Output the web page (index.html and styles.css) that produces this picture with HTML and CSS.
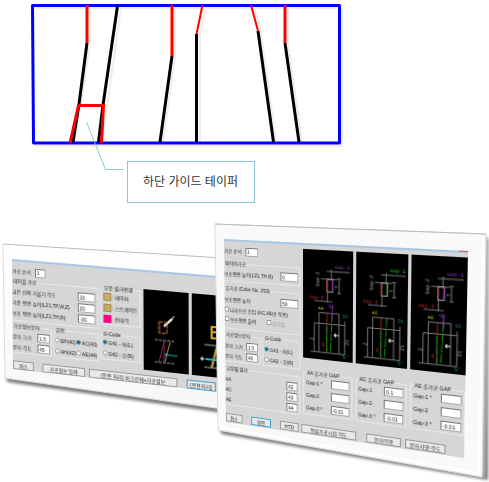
FILE: index.html
```html
<!DOCTYPE html>
<html lang="ko">
<head>
<meta charset="utf-8">
<title>하단 가이드 테이퍼</title>
<link rel="stylesheet" href="styles.css">
</head>
<body>
<main>
<section class="section-view">
  <svg class="drawing" viewBox="0 0 489 150" fill="none" stroke-width="3" aria-hidden="true">
    <g stroke="#f1efe5" stroke-width="2">
      <path d="M36 8H337M342 8V146H35M90 8V44L75 143M121 8L102 142M175 8V58L163 142M206 8L200 35V142M254 8L261 32L276 142M288 8V44L302 142"/>
    </g>
    <path stroke="#0000ff" d="M33 5.500H339.500V143H33.500L32.500 5.500Z" stroke-linejoin="round"/>
    <g stroke="#000">
      <path d="M87 43L79 104L73 142M117.500 6L103 105L98.500 142M172 56L160 142M196.500 34V142M258 31L273.500 142M285 43L299 142"/>
    </g>
    <g stroke="#ff0000">
      <path d="M87 5V43M70 143L78.500 105.500H103.500L101.500 143M172 5V56M285 5V43"/>
      <path stroke-width="2" d="M202.500 5L196.500 34M251 5L258 31"/>
    </g>
    <path stroke="#8fc7d8" stroke-width="1" d="M86.500 122L105.500 169.500H123.500"/>
  </svg>
  <p class="callout">하단 가이드 테이퍼</p>
</section>

<section class="scene">
  <svg class="frame" viewBox="0 213 489 269" aria-hidden="true">
    <defs>
      <linearGradient id="edge" x1="0" y1="0" x2="0" y2="1"><stop offset="0" stop-color="#fff"/><stop offset="1" stop-color="#f7f7f7"/></linearGradient>
      <filter id="soft" x="-5%" y="-10%" width="110%" height="125%"><feGaussianBlur stdDeviation="1.500"/></filter>
    </defs>
    <path d="M5 377L230 409V414L8 382Z" fill="#777" filter="url(#soft)"/>
    <path d="M3 244L230 258V410L5 378Z" fill="url(#edge)"/>
    <path d="M3 244L230 258.500" stroke="#bbb" fill="none"/>
    <path d="M3 244L5 378L230 410" stroke="#ddd" fill="none"/>
  </svg>
  <form class="dialog table-dialog">
    <div class="titlebar"></div>
    <div class="body">
      <div class="settings">
        <label class="order">가공 순서 <input value="1"></label>
        <fieldset class="fields">
          <legend>테이블 가공</legend>
          <label>굽은 선의 기울기 각도 <input value="10."></label>
          <label>기준 평면 높이(LZ1,TP,W,Z) <input value="20."></label>
          <label>보조 평면 높이(LZ1,TH,R) <input value="-30."></label>
        </fieldset>
        <div class="pair">
          <fieldset class="fields">
            <legend>가공정보문자</legend>
            <label>문자 크기 <input value="1.5"></label>
            <label>문자 각도 <input value="45"></label>
          </fieldset>
          <fieldset class="types">
            <legend>유형</legend>
            <label><input type="radio" name="type">EP(40)</label>
            <label><input type="radio" name="type" checked>AC(43)</label>
            <label><input type="radio" name="type">AH(42)</label>
            <label><input type="radio" name="type">AE(44)</label>
          </fieldset>
        </div>
      </div>
      <div class="colors">
        <fieldset class="palette">
          <legend>부분 칼라변경</legend>
          <div><i class="swatch"></i>: 테이퍼</div>
          <div><i class="swatch"></i>: 스트레이트</div>
          <div><i class="swatch pink"></i>: 반대각</div>
        </fieldset>
        <fieldset class="gcode">
          <legend>G-Code</legend>
          <label><input type="radio" name="g1" checked>G41 - 좌(L)</label>
          <label><input type="radio" name="g1">G42 - 우(R)</label>
        </fieldset>
      </div>
      <svg class="preview" viewBox="0 0 44 80" fill="none" aria-hidden="true">
        <path d="M20 35L28 27" stroke="#fff" stroke-width="2"/><path d="M27 28l3-4" stroke="#eee"/>
        <path d="M15 31H23V42H15Z" stroke="#b48a20" stroke-dasharray="4 1"/><path d="M16 31V42M20 50L15 71M20 50V71" stroke="#92205c"/>
        <path d="M26 50L21 70" stroke="#b48a20"/><path d="M11 49H30M11 71H30" stroke="#999" stroke-dasharray="3 1"/>
        <path d="M21 63H33M21 63l2-2M21 63l2 2" stroke="#2aa6bd"/>
      </svg>
      <svg class="preview" viewBox="0 0 44 80" fill="none" aria-hidden="true">
        <path d="M26 31H19V42H26M19 36H26" stroke="#d5a82d" stroke-width="2"/><path d="M12 49H32M12 71H32" stroke="#aaa"/><path d="M24 50L19 71" stroke="#d5a82d" stroke-width="2"/><path d="M13 63H25" stroke="#2aa6bd" stroke-width="2"/><path d="M8 63H12M10 61V65" stroke="#fff"/>
      </svg>
    </div>
    <div class="actions">
      <button type="button">취소</button><button type="button">가공정보 입력</button><button type="button">(응용 처리) 마크로체+가공정보</button><button type="button" class="default">(응용처리)</button>
    </div>
  </form>

  <svg class="frame" viewBox="0 213 489 269" aria-hidden="true">
    <path d="M219 429L483 476L488 236V480L222 434Z" fill="#777" filter="url(#soft)"/>
    <path d="M485 235L489 240L485 479L481 476Z" fill="#aaa" filter="url(#soft)"/>
    <path d="M215 224L486 234L482 477L218 430Z" fill="#f9f9f9"/>
    <path d="M215 224L486 234L482 477L218 430Z" fill="none" stroke="#ddd"/>
    <path d="M215 224L486 234" stroke="#bbb" fill="none"/>
    <path d="M483 237L479 473L220 427" stroke="#fff" stroke-width="2" fill="none"/>
  </svg>
  <form class="dialog wire-dialog">
    <div class="titlebar"><span class="close"></span></div>
    <div class="body">
      <div class="settings">
        <label class="order">가공 순서 <input value="1"></label>
        <fieldset class="fields wire">
          <legend>와이어가공</legend>
          <label>보조평면 높이(LZ1,TH,R) <input value="0"></label>
        </fieldset>
        <fieldset class="fields rest">
          <legend>휴가공 (Color No. 253)</legend>
          <label>보조평면 높이 <input value="50"></label>
          <label class="check"><input type="checkbox">나사으로 진입 (AC,AE만 적용)</label>
          <div class="checks"><label class="check"><input type="checkbox">보조평면 출력</label><label class="check off"><input type="checkbox" disabled>상대값</label></div>
        </fieldset>
        <div class="pair">
          <fieldset class="fields">
            <legend>가공정보문자</legend>
            <label>문자 크기 <input value="1.5"></label>
            <label>문자 각도 <input value="45"></label>
          </fieldset>
          <fieldset class="gcode">
            <legend>G-Code</legend>
            <label><input type="radio" name="g2" checked>G41 - 좌(L)</label>
            <label><input type="radio" name="g2">G42 - 우(R)</label>
          </fieldset>
        </div>
        <fieldset class="fields layers">
          <legend>교정별 칼라</legend>
          <label>AA <input value="42"></label>
          <label>AC <input value="43"></label>
          <label>AE <input value="44"></label>
        </fieldset>
      </div>
      <div class="column">
        <svg class="preview" viewBox="0 0 52 110" fill="none" aria-hidden="true">
          <g id="base">
            <path d="M25 20H49M30 18V28M19 28H36M26 41V52M12 51H31M38 27V42M36 27H40M36 42H40" stroke="#777"/>
            <path d="M25.500 28H31.500V41H25.500Z" stroke="#aaa"/><path d="M25.500 28V41" stroke="#c33"/>
            <path d="M17 63H38V104H17ZM12 74H44M12 74V104M44 70V104M8 104H44" stroke="#777"/>
            <path d="M25.500 63V104" stroke="#922"/><path d="M31 63L29 104M25 76V103" stroke="#1c8a1c" stroke-dasharray="9 1"/>
            <path d="M33 85H38M35 83l-2 2l2 2" stroke="#ddd"/>
            <text class="gray" transform="translate(17 36) rotate(-90)">Gap-2</text>
            <text class="gray" transform="translate(37 37) rotate(-90)">T</text>
            <text class="red" x="7" y="49">Gap-3</text>
            <text class="cyan" x="42" y="66">St</text><text class="cyan" x="42" y="108">S'</text>
            <text class="red" x="20" y="97">Q</text>
            <text class="gray" transform="translate(11 92) rotate(-90)">Z</text><text class="gray" transform="translate(48 94) rotate(-90)">Z1</text>
          </g>
          <path d="M31 28V41M31 55V68" stroke="#74279a"/><text class="purple" x="34" y="17">Gap-1</text><text class="yellow" x="16" y="60">AA</text><text class="purple" x="27" y="57">Q1</text>
        </svg>
        <fieldset class="fields gap"><legend>AA 휴가공 GAP</legend><label>Gap-1 * <input></label><label>Gap-2 <input></label><label>Gap-3 * <input value="-0.01"></label></fieldset>
      </div>
      <div class="column">
        <svg class="preview" viewBox="0 0 52 110" fill="none" aria-hidden="true">
          <use href="#base"/><path d="M31 28V41" stroke="#1fbf1f"/><text class="green" x="34" y="17">Gap-1</text><text class="yellow" x="16" y="60">AC</text>
        </svg>
        <fieldset class="fields gap"><legend>AC 휴가공 GAP</legend><label>Gap-1 <input value="0.1"></label><label>Gap-2 <input></label><label>Gap-3 * <input value="-0.01"></label></fieldset>
      </div>
      <div class="column">
        <svg class="preview" viewBox="0 0 52 110" fill="none" aria-hidden="true">
          <use href="#base"/><path d="M31 28V41M31 55V68" stroke="#9a35cc"/><text class="purple" x="34" y="17">Gap-1</text><text class="yellow" x="16" y="60">AE</text><text class="purple" x="27" y="57">Q1</text>
        </svg>
        <fieldset class="fields gap"><legend>AE 휴가공 GAP</legend><label>Gap-1 * <input></label><label>Gap-2 <input></label><label>Gap-3 * <input value="-0.01"></label></fieldset>
      </div>
    </div>
    <div class="actions">
      <button type="button">취소</button><button type="button" class="default">확인</button><button type="button">HTD</button><button type="button">형상가공시점 각도</button><button type="button">문자각행</button><button type="button">문자사행 각도</button>
    </div>
  </form>
</section>
</main>
</body>
</html>
```

FILE: styles.css
```css
* { box-sizing: border-box; }
body {
  margin: 0;
  background: #fff;
  color: #222;
  font-family: "Liberation Sans", "Noto Sans CJK KR", sans-serif;
  overflow: hidden;
}

.section-view { padding-bottom: 10px; }
.drawing { display: block; width: 100%; overflow: visible; }
.callout {
  width: fit-content;
  margin: 11px 0 0 127px;
  padding: 0 16px 0 15px;
  border: 1px solid #8fc7d8;
  background: #fff;
  font-size: 12px;
  line-height: 40px;
  color: #333;
}

/* Two tilted windows that overlap */
.scene { position: relative; height: 269px; }
.frame { position: absolute; inset: 0; width: 100%; }
.dialog {
  position: absolute;
  display: flex;
  flex-direction: column;
  overflow: hidden;
  background: #d6d6d6;
  font-size: 5px;
  line-height: 6px;
  white-space: nowrap;
  transform-origin: 0 0;
}
.table-dialog {
  left: 12px; top: 46px; width: 206px; height: 113px;
  transform: matrix3d(0.947, 0.0782, 0, -0.000256, 0.0089, 0.978, 0, 0.0000434, 0, 0, 1, 0, 0, 0, 0, 1);
}
.wire-dialog {
  left: 224px; top: 26px; width: 244px; height: 195px;
  transform: matrix3d(0.88, 0.0433, 0, -0.000492, 0.0105, 0.96, 0, 0.000119, 0, 0, 1, 0, 0, 0, 0, 1);
}
.titlebar { flex: none; height: 2px; background: #a9c6e6; }
.close { display: block; width: 8px; height: 1px; margin-left: auto; background: #c8584a; }
.body { display: flex; }

fieldset { min-width: 0; margin: 0; padding: 0 2px; border: 1px solid #e6e9ea; }
legend { padding: 0 1px; line-height: 6px; }
label { display: flex; align-items: center; }
input { margin: 0; font: inherit; color: #222; }
.dialog input:not([type]) {
  height: 9px; padding: 0 1px; border: 1px solid #aaa; border-top-color: #777; border-left-color: #777; border-radius: 0; background: #fff; line-height: 6px;
}
.fields label { justify-content: space-between; height: 11px; }
.order { gap: 4px; height: 12px; }
.order input { width: 11px; }
.settings > fieldset { border-left: 0; padding-left: 0; }
.settings .pair > fieldset:first-child { border-left: 0; padding-left: 0; }
.pair { display: flex; gap: 2px; }

input[type="radio"], input[type="checkbox"] {
  appearance: none; flex: none; width: 5px; height: 5px; margin-right: 1px; border: 1px solid #999; background: #fff;
}
input[type="radio"] { border-radius: 50%; }
input[type="radio"]:checked { border-color: #6fa3bd; background: #17617f; }

.swatch { flex: none; width: 8px; height: 8px; border: 1px solid #a18c50; background: #c8aa61; }
.swatch.pink { border-color: #ff0080; background: #ff0080; }
.preview { display: block; background: #000; }

.table-dialog .body { height: 101px; padding-top: 4px; }
.table-dialog .settings { width: 94px; }
.table-dialog .fields input { width: 18px; }
.table-dialog .settings > .fields { height: 44px; margin-top: 1px; padding-top: 2px; }
.table-dialog .pair { margin-top: 2px; }
.table-dialog .pair .fields { width: 41px; padding-top: 2px; padding-right: 1px; }
.table-dialog .pair .fields input { width: 13px; }
.types { display: grid; grid-template-columns: 1fr 1fr; flex: 1; padding: 2px 0 0; }
.types label { height: 11px; }
.colors { display: flex; flex-direction: column; gap: 6px; width: 42px; margin: 12px 3px 0 2px; }
.palette div { display: flex; align-items: center; gap: 1px; height: 11px; }
.gcode { padding: 0 1px; }
.gcode label { height: 11px; }
.table-dialog .preview { flex: none; width: 44px; height: 80px; margin: 13px 3px 0 0; }

.wire-dialog .body { height: 180px; padding-top: 4px; gap: 3px; }
.wire-dialog .settings { width: 83px; }
.wire-dialog .order input { width: 14px; }
.wire-dialog .settings > fieldset { margin-top: 4px; }
.fields.wire, .fields.rest { padding-right: 1px; }
.wire input:not([type]), .rest input:not([type]) { width: 19px; }
.wire { height: 22px; padding-top: 2px; }
.rest { height: 46px; padding-top: 3px; }
.wire-dialog .check { justify-content: flex-start; height: 9px; }
.rest > label { margin-bottom: 1px; }
.checks { display: flex; gap: 12px; }
.off { color: #999; }
.wire-dialog .pair { margin-top: 3px; }
.wire-dialog .pair fieldset { padding-top: 3px; }
.wire-dialog .pair .fields { width: 40px; }
.wire-dialog .pair .fields input { width: 13px; }
.wire-dialog .gcode { flex: 1; }
.layers { padding-top: 3px; }
.layers input:not([type]) { width: 12px; }
.column { flex: 1; min-width: 0; }
.column .preview { width: 100%; height: 110px; }
.gap { margin-top: 12px; }
.gap label { height: 13px; }
.gap input:not([type]) { width: 19px; }
.preview text { font: 5px "Liberation Mono", monospace; }
.gray { fill: #aaa; }
.red { fill: #d02020; }
.cyan { fill: #20a5b5; }
.purple { fill: #9a35cc; }
.green { fill: #20d020; }
.yellow { fill: #d4d420; }

.actions { display: flex; align-items: flex-start; }
.actions button { flex: none; height: 9px; padding: 0 2px; border: 1px solid #999; border-radius: 0; background: #e9e9e9; color: #222; font: inherit; overflow: hidden; }
.actions .default { border-color: #3aa0c8; }
.table-dialog .actions { gap: 9px; padding-top: 2px; }
.table-dialog .actions button:nth-child(1) { width: 22px; }
.table-dialog .actions button:nth-child(2) { width: 44px; }
.table-dialog .actions button:nth-child(3) { width: 88px; margin-left: -5px; }
.wire-dialog .actions { gap: 10px; padding-top: 3px; }
.wire-dialog .actions button:nth-child(1) { width: 19px; }
.wire-dialog .actions button:nth-child(2) { width: 22px; }
.wire-dialog .actions button:nth-child(3) { width: 20px; }
.wire-dialog .actions button:nth-child(4) { width: 57px; margin-left: -7px; }
.wire-dialog .actions button:nth-child(5) { width: 34px; }
.wire-dialog .actions button:nth-child(6) { width: 38px; margin-left: -6px; }
```
